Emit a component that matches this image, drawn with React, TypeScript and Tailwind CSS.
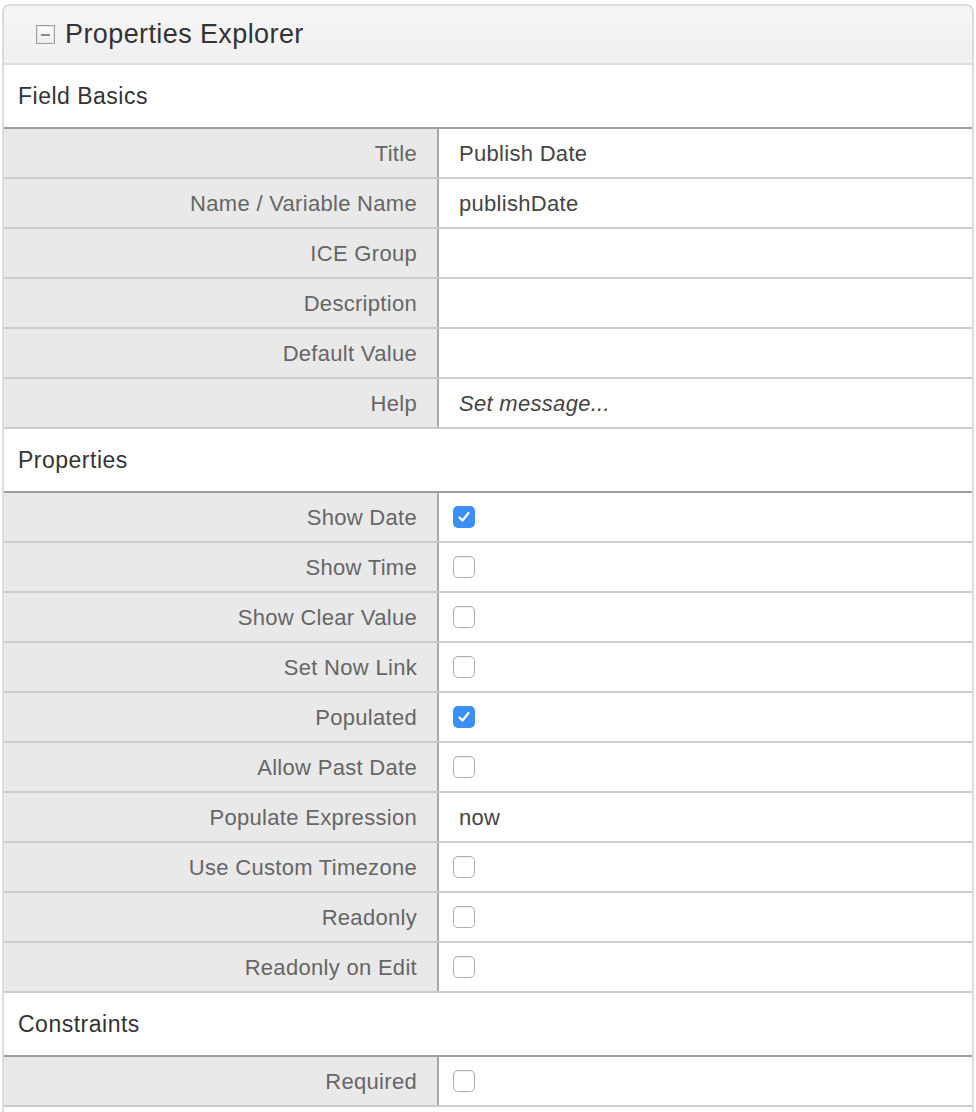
import React from "react";

type Row = { label: string; value?: string; italic?: boolean; check?: boolean };

const sections: { title: string; rows: Row[] }[] = [
  {
    title: "Field Basics",
    rows: [
      { label: "Title", value: "Publish Date" },
      { label: "Name / Variable Name", value: "publishDate" },
      { label: "ICE Group", value: "" },
      { label: "Description", value: "" },
      { label: "Default Value", value: "" },
      { label: "Help", value: "Set message...", italic: true },
    ],
  },
  {
    title: "Properties",
    rows: [
      { label: "Show Date", check: true },
      { label: "Show Time", check: false },
      { label: "Show Clear Value", check: false },
      { label: "Set Now Link", check: false },
      { label: "Populated", check: true },
      { label: "Allow Past Date", check: false },
      { label: "Populate Expression", value: "now" },
      { label: "Use Custom Timezone", check: false },
      { label: "Readonly", check: false },
      { label: "Readonly on Edit", check: false },
    ],
  },
  {
    title: "Constraints",
    rows: [{ label: "Required", check: false }],
  },
];

function Checkbox({ checked }: { checked: boolean }) {
  if (checked) {
    return (
      <span className="flex h-[22px] w-[22px] items-center justify-center rounded-[5px] bg-[#3b8ff6]">
        <svg width="14" height="14" viewBox="0 0 14 14" fill="none">
          <path d="M2.5 7.5 L5.5 10.5 L11.5 3" stroke="white" strokeWidth="2.2" strokeLinecap="round" strokeLinejoin="round" />
        </svg>
      </span>
    );
  }
  return (
    <span className="block h-[22px] w-[22px] rounded-[5px] border border-[#adadad] bg-white shadow-[inset_0_1px_1px_rgba(0,0,0,0.06)]" />
  );
}

function FieldRow({ row }: { row: Row }) {
  return (
    <div className="flex h-[50px] border-b-2 border-[#cccccc]">
      <div className="flex w-[435px] items-center justify-end border-r-2 border-[#a9a9a9] bg-[#e9e9e9] pr-[20px] text-[22px] tracking-[0.3px] text-[#666]">
        {row.label}
      </div>
      <div className="flex flex-1 items-center bg-white">
        {row.check !== undefined ? (
          <div className="pl-[14px]">
            <Checkbox checked={row.check} />
          </div>
        ) : (
          <span className={`pl-[20px] text-[22px] tracking-[0.3px] text-[#444] ${row.italic ? "italic" : ""}`}>
            {row.value}
          </span>
        )}
      </div>
    </div>
  );
}

export default function App() {
  return (
    <div className="min-h-screen bg-white pt-[4px] pl-[2px]" style={{ fontFamily: '"Liberation Sans", Arial, sans-serif' }}>
      <div className="w-[972px] overflow-hidden rounded-t-[8px] border-2 border-b-0 border-[#dcdcdc]">
        {/* panel header */}
        <div className="flex h-[59px] items-center gap-[10px] border-b-2 border-[#dddddd] bg-gradient-to-b from-[#f5f5f5] to-[#f0f0f0] pl-[32px]">
          <span className="flex h-[19px] w-[19px] items-center justify-center border border-[#a0a0a0] bg-gradient-to-b from-white to-[#ececec] shadow-[inset_0_0_0_1px_#e6e6e6]">
            <span className="block h-[2px] w-[9px] bg-[#8a8a8a]" />
          </span>
          <span className="text-[27px] tracking-[0.4px] text-[#333]">Properties Explorer</span>
        </div>

        {sections.map((s) => (
          <div key={s.title}>
            <div className="flex h-[64px] items-center border-b-2 border-[#9d9d9d] bg-white pl-[14px] text-[23px] tracking-[0.5px] text-[#333]">
              {s.title}
            </div>
            {s.rows.map((r) => (
              <FieldRow key={r.label} row={r} />
            ))}
          </div>
        ))}
        <div className="h-[40px] bg-white" />
      </div>
    </div>
  );
}
